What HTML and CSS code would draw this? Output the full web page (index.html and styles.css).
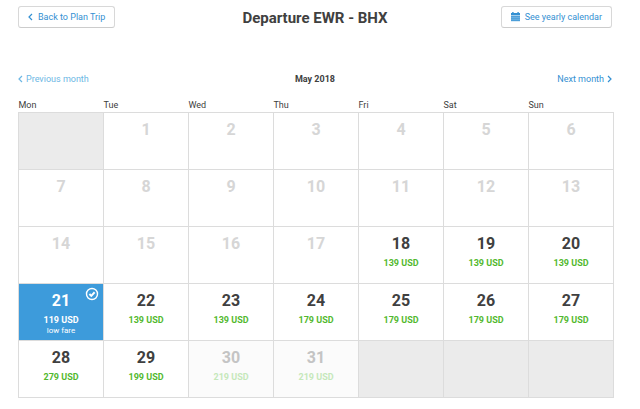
FILE: index.html
```html
<!DOCTYPE html>
<html lang="en">
<head>
    <meta charset="UTF-8">
    <meta name="viewport" content="width=device-width, initial-scale=1.0">
    <title>Departure EWR - BHX</title>
    <link rel="stylesheet" href="styles.css">
</head>
<body>

<header class="top-bar">
    <div class="top-left">
        <button type="button" class="top-button">
            <svg class="chevron" viewBox="0 0 5 8"><path d="M4 1L1 4l3 3"/></svg>
            Back to Plan Trip
        </button>
    </div>
    <h1>Departure EWR - BHX</h1>
    <div class="top-right">
        <button type="button" class="top-button">
            <svg class="calendar-icon" viewBox="0 0 9 10">
                <path class="icon-head" d="M0 1h1.2V0h1.4v1h3.8V0h1.4v1H9v2H0z"/>
                <path class="icon-body" d="M0 3.5h9V9.2H0z"/>
                <path class="icon-lines" d="M0 5.4h9M0 7.3h9"/>
            </svg>
            See yearly calendar
        </button>
    </div>
</header>

<nav class="month-nav">
    <a href="#" class="prev-month">
        <svg class="chevron" viewBox="0 0 5 8"><path d="M4 1L1 4l3 3"/></svg>
        Previous month
    </a>
    <h2>May 2018</h2>
    <a href="#" class="next-month">
        Next month
        <svg class="chevron" viewBox="0 0 5 8"><path d="M1 1l3 3-3 3"/></svg>
    </a>
</nav>

<table class="calendar">
    <thead>
        <tr>
            <th>Mon</th>
            <th>Tue</th>
            <th>Wed</th>
            <th>Thu</th>
            <th>Fri</th>
            <th>Sat</th>
            <th>Sun</th>
        </tr>
    </thead>
    <tbody>
        <tr>
            <td class="empty"></td>
            <td><div class="day past">1</div></td>
            <td><div class="day past">2</div></td>
            <td><div class="day past">3</div></td>
            <td><div class="day past">4</div></td>
            <td><div class="day past">5</div></td>
            <td><div class="day past">6</div></td>
        </tr>
        <tr>
            <td><div class="day past">7</div></td>
            <td><div class="day past">8</div></td>
            <td><div class="day past">9</div></td>
            <td><div class="day past">10</div></td>
            <td><div class="day past">11</div></td>
            <td><div class="day past">12</div></td>
            <td><div class="day past">13</div></td>
        </tr>
        <tr>
            <td><div class="day past">14</div></td>
            <td><div class="day past">15</div></td>
            <td><div class="day past">16</div></td>
            <td><div class="day past">17</div></td>
            <td><button type="button" class="day">18<span class="price">139 USD</span></button></td>
            <td><button type="button" class="day">19<span class="price">139 USD</span></button></td>
            <td><button type="button" class="day">20<span class="price">139 USD</span></button></td>
        </tr>
        <tr>
            <td>
                <button type="button" class="day selected">21<span class="price">119 USD</span><span class="note">low fare</span>
                    <svg class="check" viewBox="0 0 14 14">
                        <circle cx="7" cy="7" r="5.5"/>
                        <path d="M4.4 7.1l1.9 1.8 3.3-3.6"/>
                    </svg>
                </button>
            </td>
            <td><button type="button" class="day">22<span class="price">139 USD</span></button></td>
            <td><button type="button" class="day">23<span class="price">139 USD</span></button></td>
            <td><button type="button" class="day">24<span class="price">179 USD</span></button></td>
            <td><button type="button" class="day">25<span class="price">179 USD</span></button></td>
            <td><button type="button" class="day">26<span class="price">179 USD</span></button></td>
            <td><button type="button" class="day">27<span class="price">179 USD</span></button></td>
        </tr>
        <tr>
            <td><button type="button" class="day">28<span class="price">279 USD</span></button></td>
            <td><button type="button" class="day">29<span class="price">199 USD</span></button></td>
            <td><button type="button" class="day unavailable" disabled>30<span class="price">219 USD</span></button></td>
            <td><button type="button" class="day unavailable" disabled>31<span class="price">219 USD</span></button></td>
            <td class="empty"></td>
            <td class="empty"></td>
            <td class="empty"></td>
        </tr>
    </tbody>
</table>

</body>
</html>
```

FILE: styles.css
```css
body {
    font-family: Roboto, Arial, sans-serif;
    font-size: 9px;
    color: #404040;
    background-color: #fff;
    margin: 0;
    padding: 6px 26px 11px 18px;
}

.top-bar,
.month-nav {
    display: grid;
    grid-template-columns: 1fr auto 1fr;
    margin-right: 2px;
}

.top-bar {
    align-items: start;
}

.top-left,
.top-right {
    display: flex;
}

.top-right {
    justify-content: flex-end;
}

h1 {
    margin: 2px 0 0;
    font-size: 15px;
    line-height: 20px;
}

.top-button {
    display: flex;
    align-items: center;
    height: 22px;
    padding: 0 9px 1px;
    background-color: #fff;
    border: 1px solid #d8d8d8;
    border-bottom-color: #ccc;
    border-radius: 3px;
    color: #3490d2;
    font-family: inherit;
    font-size: 9px;
    cursor: pointer;
}

.chevron {
    width: 5px;
    height: 8px;
    fill: none;
    stroke: currentColor;
    stroke-width: 1.2;
}

.top-button .chevron {
    margin-right: 5px;
}

.calendar-icon {
    width: 9px;
    height: 10px;
    margin-right: 5px;
}

.icon-head {
    fill: #3490d2;
}

.icon-body {
    fill: #4d9fd9;
}

.icon-lines {
    stroke: #8fc5ea;
    stroke-width: 0.5;
}

.month-nav {
    align-items: center;
    margin-top: 44px;
    line-height: 14px;
}

.month-nav a {
    display: flex;
    align-items: center;
    gap: 3px;
    color: #3490d2;
    text-decoration: none;
}

.month-nav .prev-month {
    color: #6db7e4;
}

.month-nav .next-month {
    justify-content: flex-end;
}

h2 {
    margin: 0;
    font-size: 9px;
}

.calendar {
    width: 100%;
    margin-top: 12px;
    table-layout: fixed;
    border-collapse: collapse;
}

.calendar th {
    padding: 0;
    font-weight: normal;
    line-height: 14px;
    text-align: left;
}

.calendar td {
    height: 56px;
    padding: 0;
    border: 1px solid #dcdcdc;
}

.calendar .empty {
    background-color: #ebebeb;
}

.day {
    position: relative;
    display: flex;
    flex-direction: column;
    align-items: center;
    box-sizing: border-box;
    width: 100%;
    height: 56px;
    padding: 8px 0 0;
    border: none;
    background-color: #fff;
    color: #404040;
    font-family: inherit;
    font-size: 16px;
    font-weight: bold;
    line-height: 18px;
}

button.day {
    cursor: pointer;
}

.day.past {
    color: #d6d6d6;
}

.price {
    margin-top: 4px;
    color: #52b92e;
    font-size: 9px;
    line-height: 12px;
}

.note {
    font-size: 8px;
    font-weight: normal;
    line-height: 10px;
}

.day.selected {
    background-color: #3d9bdb;
    color: #fff;
}

.selected .price {
    color: #fff;
}

.check {
    position: absolute;
    top: 3px;
    right: 4px;
    width: 14px;
    height: 14px;
    fill: none;
    stroke: #fff;
    stroke-width: 1.4;
}

.check path {
    stroke-width: 2;
}

.day.unavailable {
    background-color: #fbfbfb;
    color: #c4c4c4;
    cursor: default;
}

.unavailable .price {
    color: #c5e8ba;
}
```
